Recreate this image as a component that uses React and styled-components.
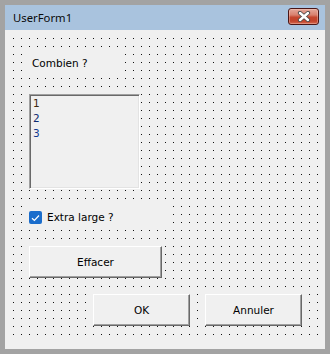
import React from "react";
import styled, { createGlobalStyle } from "styled-components";

const GlobalStyle = createGlobalStyle`
  html, body {
    margin: 0;
    padding: 0;
    background: #a3a3a3;
  }
  #root {
    width: 330px;
    height: 354px;
  }
`;

const Frame = styled.div`
  box-sizing: border-box;
  width: 330px;
  height: 354px;
  padding: 5px 5px 5px 5px;
  background: #a3a3a3;
  display: flex;
  flex-direction: column;
`;

const TitleBar = styled.div`
  height: 25px;
  flex-shrink: 0;
  background: #a9c3de;
  display: flex;
  align-items: center;
  justify-content: space-between;
  padding: 0 6px 0 8px;
`;

const Title = styled.span`
  font-family: "Noto Sans", "Open Sans", sans-serif;
  font-size: 11.3px;
  color: #0a0a0a;
  margin-top: -1px;
`;

const CloseButton = styled.div`
  box-sizing: border-box;
  width: 31px;
  height: 17px;
  margin-top: -3px;
  border: 1px solid #4a1616;
  border-radius: 3px;
  background: linear-gradient(
    180deg,
    #e3a79a 0%,
    #d9806e 40%,
    #c4462e 55%,
    #c2432b 80%,
    #d46a52 100%
  );
  box-shadow: inset 0 0 0 1px rgba(255, 220, 210, 0.35);
  display: flex;
  align-items: center;
  justify-content: center;
`;

const Canvas = styled.div`
  flex: 1;
  box-sizing: border-box;
  padding: 8px 7px 7px 8px;
  background-image: conic-gradient(
      from 0deg at 1px 1px,
      transparent 75%,
      #111 0
    ),
    linear-gradient(#f0f0f0, #f0f0f0);
  background-size: 8px 8px, 100% 100%;
  background-repeat: repeat, no-repeat;
  background-origin: content-box, border-box;
  background-clip: content-box, border-box;
  display: flex;
  flex-direction: column;
  align-items: flex-start;
  font-family: "DejaVu Sans", Verdana, sans-serif;
  font-size: 10.5px;
  color: #000;
`;

const Label = styled.div`
  box-sizing: border-box;
  width: 100px;
  height: 20px;
  margin: 16px 0 0 10px;
  padding: 3px 0 0 9px;
  line-height: 13px;
  background: #f0f0f0;
`;

const ListBox = styled.div`
  box-sizing: border-box;
  width: 111px;
  height: 95px;
  margin: 20px 0 0 16px;
  padding: 1px 2px;
  background: #f0f0f0;
  border-style: solid;
  border-width: 1px;
  border-color: #a0a0a0 #ffffff #ffffff #a0a0a0;
  box-shadow: inset 1px 1px 0 #696969, inset -1px -1px 0 #e3e3e3;
`;

const ListItem = styled.div`
  line-height: 15px;
  padding-left: 1px;
  color: ${(p) => p.$tint};
`;

const CheckRow = styled.label`
  box-sizing: border-box;
  width: 150px;
  height: 26px;
  margin: 15px 0 0 10px;
  padding-left: 6px;
  display: flex;
  align-items: center;
  gap: 5px;
  background: #f0f0f0;
`;

const CheckBox = styled.span`
  width: 13px;
  height: 13px;
  border-radius: 2px;
  background: #1a6dcc;
  display: flex;
  align-items: center;
  justify-content: center;
  margin-top: 1px;
`;

const Button = styled.div`
  box-sizing: border-box;
  width: ${(p) => p.$width}px;
  height: 32px;
  display: flex;
  align-items: center;
  justify-content: center;
  background: #f0f0f0;
  border-style: solid;
  border-width: 1px;
  border-color: #ffffff #696969 #696969 #ffffff;
  box-shadow: inset -1px -1px 0 #a0a0a0;
`;

const EraseButton = styled(Button)`
  margin: 16px 0 0 16px;
`;

const ButtonRow = styled.div`
  display: flex;
  gap: 15px;
  margin: 16px 0 0 80px;
`;

const items = [
  { label: "1", tint: "#3e2a0e" },
  { label: "2", tint: "#0f2a70" },
  { label: "3", tint: "#12398f" },
];

export default function App() {
  return (
    <>
      <GlobalStyle />
      <Frame>
        <TitleBar>
          <Title>UserForm1</Title>
          <CloseButton>
            <svg width="14" height="11" viewBox="0 0 14 11">
              <path
                d="M3 2 L11 9 M11 2 L3 9"
                stroke="#4b4b4b"
                strokeWidth="4.2"
                strokeLinecap="round"
                fill="none"
              />
              <path
                d="M3 2 L11 9 M11 2 L3 9"
                stroke="#ffffff"
                strokeWidth="2.4"
                strokeLinecap="round"
                fill="none"
              />
            </svg>
          </CloseButton>
        </TitleBar>
        <Canvas>
          <Label>Combien ?</Label>
          <ListBox>
            {items.map((it) => (
              <ListItem key={it.label} $tint={it.tint}>
                {it.label}
              </ListItem>
            ))}
          </ListBox>
          <CheckRow>
            <CheckBox>
              <svg width="9" height="8" viewBox="0 0 9 8">
                <path
                  d="M1 4.2 L3.4 6.5 L8 1.5"
                  stroke="#ffffff"
                  strokeWidth="1.2"
                  fill="none"
                />
              </svg>
            </CheckBox>
            <span>Extra large ?</span>
          </CheckRow>
          <EraseButton $width={133}>Effacer</EraseButton>
          <ButtonRow>
            <Button $width={97}>OK</Button>
            <Button $width={97}>Annuler</Button>
          </ButtonRow>
        </Canvas>
      </Frame>
    </>
  );
}
